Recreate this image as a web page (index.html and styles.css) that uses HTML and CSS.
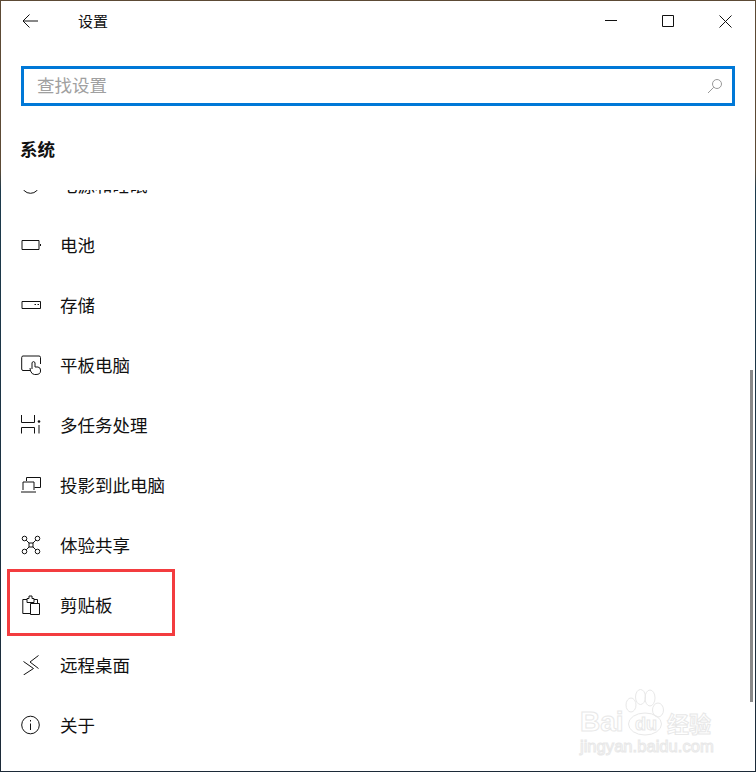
FILE: index.html
```html
<!DOCTYPE html>
<html lang="zh-CN">
<head>
<meta charset="UTF-8">
<meta name="viewport" content="width=device-width, initial-scale=1.0">
<title>设置</title>
<link rel="stylesheet" href="styles.css">
</head>
<body>
<div class="window">
    <div class="titlebar">
        <svg class="back-icon" width="16" height="14" viewBox="0 0 16 14"><path d="M7.500 .5 1 7l6.500 6.500M1 7h15"/></svg>
        <span class="title">设置</span>
        <div class="window-buttons">
            <svg width="12" height="12" viewBox="0 0 12 12"><path d="M0 5.500h12"/></svg>
            <svg width="12" height="12" viewBox="0 0 12 12"><path d="M.5 .5h11v11H.5z"/></svg>
            <svg width="13" height="13" viewBox="0 0 13 13"><path d="M.5 .5l12 12M12.500 .5l-12 12"/></svg>
        </div>
    </div>

    <div class="search-box">
        <span class="search-text">查找设置</span>
        <svg class="search-icon" width="16" height="16" viewBox="0 0 16 16"><circle cx="10" cy="6" r="4.500"/><path d="M6.800 9.200 1 15"/></svg>
    </div>

    <h2 class="section-title">系统</h2>

    <div class="list-clip">
        <ul class="nav-list">
            <li class="nav-item">
                <svg width="20" height="20" viewBox="0 0 20 20"><circle cx="9.500" cy="9.500" r="8.800"/></svg>
                <span>电源和睡眠</span>
            </li>
            <li class="nav-item">
                <svg width="20" height="20" viewBox="0 0 20 20"><path d="M1 5.500h17v9H1zM19.500 9v2"/></svg>
                <span>电池</span>
            </li>
            <li class="nav-item">
                <svg width="20" height="20" viewBox="0 0 20 20"><path d="M1 6.500h18.500v7H1zM13.500 9.500h1.500M16.500 9.500h1.500"/></svg>
                <span>存储</span>
            </li>
            <li class="nav-item">
                <svg width="20" height="20" viewBox="0 0 20 20"><path d="M9 15.500H2Q.7 15.500 .7 14V2.500Q.7 1 2 1h16q1.500 0 1.500 1.500V9M11 14V7.500q1.500-1.800 3 0V12h3q2.500 .5 2.500 3v1q0 3.500-4.500 3.500h-1.500q-2.500 0-4-3.500l-.5-3"/></svg>
                <span>平板电脑</span>
            </li>
            <li class="nav-item">
                <svg width="20" height="20" viewBox="0 0 20 20"><path d="M.5 0V7.500H13.500V0M.5 18.500V12.500H13.500V18.500M18 10v8.500"/><circle class="dot" cx="18" cy="6.500" r="1.300"/></svg>
                <span>多任务处理</span>
            </li>
            <li class="nav-item">
                <svg width="20" height="20" viewBox="0 0 20 20"><path d="M5.500 6V2.500H19.500V12.500H13.500M2 15V7H13V15M0 17H15"/></svg>
                <span>投影到此电脑</span>
            </li>
            <li class="nav-item">
                <svg width="20" height="20" viewBox="0 0 20 20"><circle cx="3.500" cy="3.500" r="2.300"/><circle cx="16.500" cy="3.500" r="2.300"/><circle cx="3.500" cy="16.500" r="2.300"/><circle cx="16.500" cy="16.500" r="2.300"/><path d="M5.200 5.200l3 3M14.800 5.200l-3 3M5.200 14.800l3-3M14.800 14.800l-3-3M8 8h4v4H8z"/></svg>
                <span>体验共享</span>
            </li>
            <li class="nav-item">
                <svg width="20" height="20" viewBox="0 0 20 20"><path d="M9 18.500H1.800V4.500H6M13 4.500H16.500V8M6 7.500V3.500H8V1H11V3.500H13V7.500H6zM9.500 8.500H18.500V19.500H9.500z"/></svg>
                <span>剪贴板</span>
                <div class="highlight-box"></div>
            </li>
            <li class="nav-item">
                <svg width="20" height="20" viewBox="0 0 20 20"><path d="M2.500 6.500l10 7-10 6.500M17.500 .5l-8.500 6.500 8.500 6.500"/></svg>
                <span>远程桌面</span>
            </li>
            <li class="nav-item">
                <svg width="20" height="20" viewBox="0 0 20 20"><circle cx="9.500" cy="10" r="8.800"/><path d="M9.500 8.500V15M9.500 5v1.500"/></svg>
                <span>关于</span>
            </li>
        </ul>
        <div class="scrollbar"></div>
    </div>

    <div class="watermark">
        <svg class="paw" width="42" height="50" viewBox="0 0 42 50"><ellipse cx="6" cy="17" rx="5" ry="7"/><ellipse cx="15.500" cy="9" rx="5" ry="7.500"/><ellipse cx="25" cy="10" rx="5" ry="8"/><ellipse cx="33" cy="22" rx="5.500" ry="7"/><ellipse cx="20" cy="36" rx="16.500" ry="11"/></svg>
        <div class="wm-row">
            <span class="wm-bai">Bai</span>
            <span class="wm-du">du</span>
            <span class="wm-cn">经验</span>
        </div>
        <div class="wm-url">jingyan.baidu.com</div>
    </div>
</div>
</body>
</html>
```

FILE: styles.css
```css
*, *::before {
    box-sizing: border-box;
}
body {
    margin: 0;
    padding: 0;
    font-family: "Noto Sans CJK SC", "Noto Sans", sans-serif;
    color: #111;
}
svg {
    fill: none;
    stroke: #111;
    stroke-width: 1;
    flex: none;
}
.dot {
    fill: #111;
    stroke: none;
}
.window {
    position: relative;
    width: 756px;
    height: 772px;
    padding: 1px;
    display: flex;
    flex-direction: column;
    background: linear-gradient(#5c4a35 0, #5c4a35 170px, #1c3a4c 190px, #1c2a38 100%);
    overflow: hidden;
}
.window > * {
    background-color: #fff;
}
.titlebar {
    height: 40px;
    display: flex;
    align-items: center;
    padding-left: 21px;
    flex: none;
}
.title {
    margin-left: 40px;
    padding-bottom: 2px;
    font-size: 15px;
}
.window-buttons {
    margin-left: auto;
    display: flex;
    align-items: center;
    gap: 45px;
    padding-right: 23px;
}
.search-box {
    position: relative;
    height: 65px;
    padding: 25px 20px 0;
    flex: none;
    display: flex;
}
.search-box::before {
    content: "";
    position: absolute;
    left: 20px;
    right: 20px;
    top: 25px;
    height: 40px;
    border: 3px solid #0078d7;
}
.search-text {
    height: 40px;
    line-height: 38px;
    padding-left: 16px;
    font-size: 17.500px;
    color: #a0a0a0;
}
.search-icon {
    position: absolute;
    right: 32px;
    top: 37px;
    stroke: #999;
}
.section-title {
    margin: 0;
    height: 84px;
    padding: 28px 0 0 19px;
    font-size: 17.500px;
    line-height: 30px;
    font-weight: 700;
    flex: none;
}
.list-clip {
    position: relative;
    flex: 1;
    overflow: hidden;
}
.nav-list {
    list-style: none;
    margin: -35px 0 0 0;
    padding: 0;
}
.nav-item {
    position: relative;
    height: 60px;
    display: flex;
    align-items: center;
    gap: 19px;
    padding-left: 20px;
    font-size: 17.500px;
}
.nav-item span {
    padding-bottom: 2px;
}
.highlight-box {
    position: absolute;
    left: 6px;
    top: -6px;
    width: 168px;
    height: 67px;
    border: 3px solid #f33c3f;
}
.scrollbar {
    position: absolute;
    right: 2px;
    top: 180px;
    width: 3px;
    height: 332px;
    background: #8a8a8a;
}
.watermark {
    position: absolute;
    left: 580px;
    top: 690px;
    width: 140px;
    background: transparent !important;
    color: #fff;
    -webkit-text-stroke: 1px #e8e8e8;
}
.paw {
    position: absolute;
    left: 45px;
    top: -2px;
    stroke: #e8e8e8;
}
.wm-row {
    position: relative;
    display: flex;
    align-items: center;
    margin-top: 18px;
    height: 28px;
}
.wm-bai {
    width: 45px;
    font-family: "Liberation Sans", sans-serif;
    font-size: 28px;
    font-weight: 700;
}
.wm-du {
    width: 42px;
    text-align: center;
    font-family: "Liberation Sans", sans-serif;
    font-size: 18px;
    font-weight: 700;
    padding-top: 4px;
}
.wm-cn {
    font-size: 22px;
    font-weight: 700;
    line-height: 28px;
}
.wm-url {
    font-family: "Liberation Sans", sans-serif;
    font-size: 16.600px;
    line-height: 18px;
    margin-top: 2px;
    white-space: nowrap;
}
```
